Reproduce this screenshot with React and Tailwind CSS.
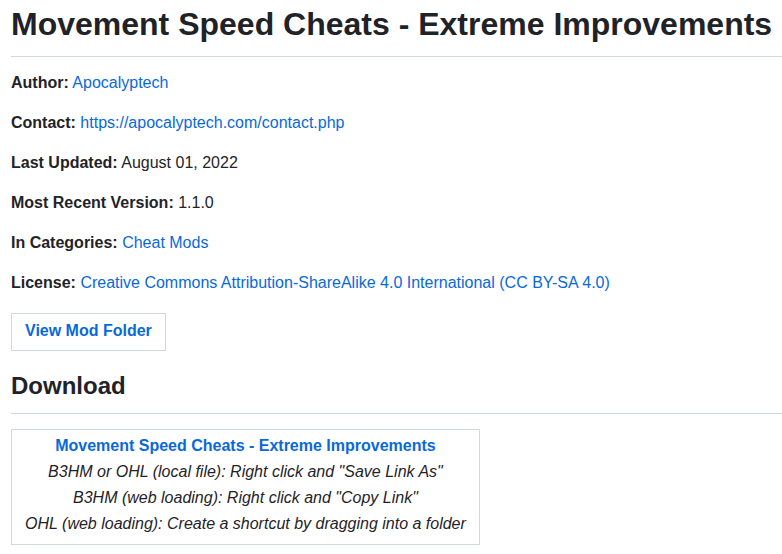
import React from 'react';

const META = [
  { label: 'Author:', value: 'Apocalyptech', link: true },
  { label: 'Contact:', value: 'https://apocalyptech.com/contact.php', link: true },
  { label: 'Last Updated:', value: 'August 01, 2022' },
  { label: 'Most Recent Version:', value: '1.1.0' },
  { label: 'In Categories:', value: 'Cheat Mods', link: true },
  { label: 'License:', value: 'Creative Commons Attribution-ShareAlike 4.0 International (CC BY-SA 4.0)', link: true },
];

const NOTES = [
  'B3HM or OHL (local file): Right click and "Save Link As"',
  'B3HM (web loading): Right click and "Copy Link"',
  'OHL (web loading): Create a shortcut by dragging into a folder',
];

export default function App() {
  return (
    <div className="min-h-screen bg-white text-[#1f2328] pl-[11px] font-['Liberation_Sans',Arial,sans-serif]">
      <h1 className="text-[32px] font-bold leading-[48px] pb-[8px] border-b border-[#d1d9e0] whitespace-nowrap">
        Movement Speed Cheats - Extreme Improvements
      </h1>

      <div className="mt-[14px] flex flex-col gap-[16px] text-[16px] leading-[24px]">
        {META.map(m => (
          <p key={m.label}>
            <span className="font-bold">{m.label}</span>{' '}
            {m.link ? <a href="#" className="text-[#0969da]">{m.value}</a> : m.value}
          </p>
        ))}
      </div>

      <a
        href="#"
        className="mt-[18px] inline-block border border-[#d1d9e0] px-[13px] h-[38px] leading-[34px] text-[16px] font-bold text-[#0969da]"
      >
        View Mod Folder
      </a>

      <h2 className="mt-[20px] text-[24px] font-bold leading-[30px] pb-[12px] border-b border-[#d1d9e0]">
        Download
      </h2>

      <div className="mt-[15px] inline-block border border-[#d1d9e0] px-[13px] pt-[3px] pb-[7px] text-center text-[16px] leading-[26px]">
        <a href="#" className="block font-bold text-[#0969da]">Movement Speed Cheats - Extreme Improvements</a>
        {NOTES.map(n => (
          <div key={n} className="italic">{n}</div>
        ))}
      </div>
    </div>
  );
}
